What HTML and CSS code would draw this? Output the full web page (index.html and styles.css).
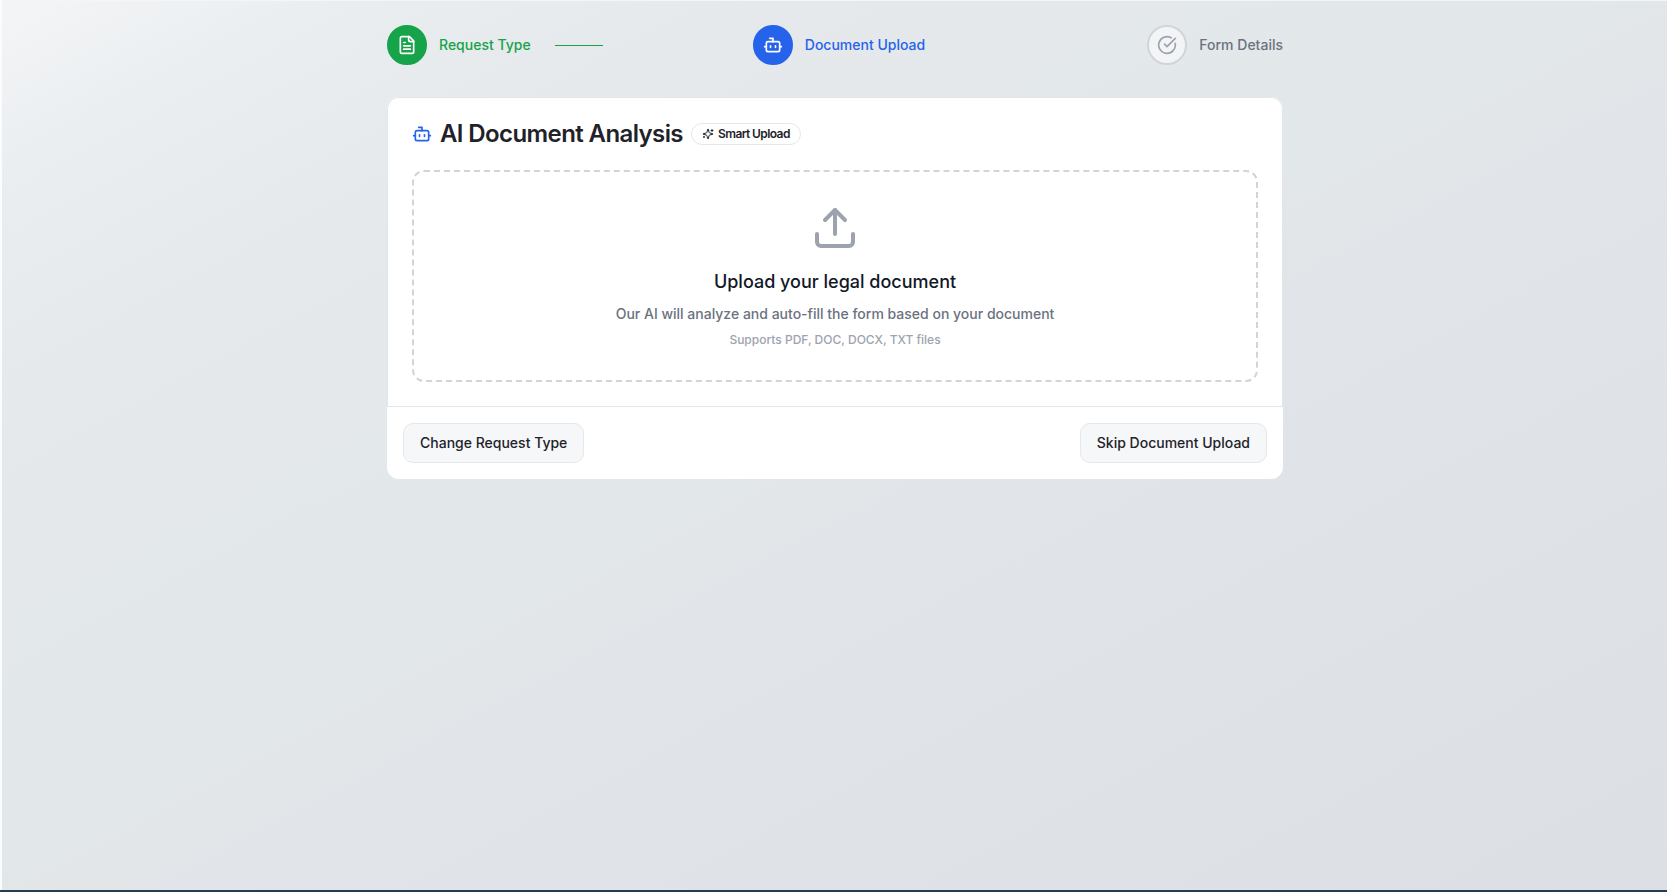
FILE: index.html
```html
<!DOCTYPE html>
<html lang="en">
<head>
<meta charset="utf-8">
<title>AI Document Analysis</title>
<link rel="stylesheet" href="styles.css">
</head>
<body>
<main class="page">
  <div class="container">
    <nav class="steps">
      <div class="step step-done">
        <span class="step-circle"><svg class="icon" viewBox="0 0 24 24"><path d="M15 2H6a2 2 0 0 0-2 2v16a2 2 0 0 0 2 2h12a2 2 0 0 0 2-2V7Z"/><path d="M14 2v4a2 2 0 0 0 2 2h4"/><path d="M10 9H8"/><path d="M16 13H8"/><path d="M16 17H8"/></svg></span>
        <span class="step-label">Request Type</span>
        <span class="step-line"></span>
      </div>
      <div class="step step-active">
        <span class="step-circle"><svg class="icon" viewBox="0 0 24 24"><path d="M12 8V4H8"/><rect width="16" height="12" x="4" y="8" rx="2"/><path d="M2 14h2"/><path d="M20 14h2"/><path d="M15 13v2"/><path d="M9 13v2"/></svg></span>
        <span class="step-label">Document Upload</span>
        <span class="step-line"></span>
      </div>
      <div class="step step-todo">
        <span class="step-circle"><svg class="icon" viewBox="0 0 24 24"><path d="M21.801 10A10 10 0 1 1 17 3.335"/><path d="m9 11 3 3L22 4"/></svg></span>
        <span class="step-label">Form Details</span>
      </div>
    </nav>
    <section class="card">
      <div class="card-body">
        <h1 class="title">
          <svg class="icon title-icon" viewBox="0 0 24 24"><path d="M12 8V4H8"/><rect width="16" height="12" x="4" y="8" rx="2"/><path d="M2 14h2"/><path d="M20 14h2"/><path d="M15 13v2"/><path d="M9 13v2"/></svg>
          <span>AI Document Analysis</span>
          <span class="badge"><svg class="icon badge-icon" viewBox="0 0 24 24"><path d="M9.937 15.5A2 2 0 0 0 8.5 14.063l-6.135-1.582a.5.5 0 0 1 0-.962L8.5 9.936A2 2 0 0 0 9.937 8.5l1.582-6.135a.5.5 0 0 1 .963 0L14.063 8.5A2 2 0 0 0 15.5 9.937l6.135 1.581a.5.5 0 0 1 0 .964L15.5 14.063a2 2 0 0 0-1.437 1.437l-1.582 6.135a.5.5 0 0 1-.963 0z"/><path d="M20 3v4"/><path d="M22 5h-4"/><path d="M4 17v2"/><path d="M5 18H3"/></svg>Smart Upload</span>
        </h1>
        <div class="dropzone">
          <svg class="icon upload-icon" viewBox="0 0 24 24"><path d="M21 15v4a2 2 0 0 1-2 2H5a2 2 0 0 1-2-2v-4"/><path d="m17 8-5-5-5 5"/><path d="M12 3v12"/></svg>
          <h2 class="drop-title">Upload your legal document</h2>
          <p class="drop-text">Our AI will analyze and auto-fill the form based on your document</p>
          <p class="drop-hint">Supports PDF, DOC, DOCX, TXT files</p>
        </div>
      </div>
      <footer class="card-footer">
        <button class="button">Change Request Type</button>
        <button class="button">Skip Document Upload</button>
      </footer>
    </section>
  </div>
</main>
</body>
</html>
```
FILE: styles.css
```css
* { box-sizing: border-box; margin: 0; padding: 0; }
body { font-family: Inter, sans-serif; font-size: 14px; line-height: 20px; color: #1f2229; }
.page {
  height: 100vh;
  padding: 25px 0 0 3px;
  border-bottom: 2px solid #233e50;
  background:
    linear-gradient(90deg, #fafcfd 2px, transparent 2px),
    linear-gradient(180deg, #f3f6f8 1px, transparent 1px),
    linear-gradient(to bottom right, #f3f5f7 0%, #eaedef 11%, #e5e9eb 23%, #e2e7e9 48%, #e1e4e8 56%, #dcdfe4 100%);
}
.container { width: 896px; margin: 0 auto; }
.icon { width: 20px; height: 20px; fill: none; stroke: currentColor; stroke-width: 2; stroke-linecap: round; stroke-linejoin: round; flex: none; }
.steps { display: flex; justify-content: space-between; margin-bottom: 32px; }
.step { display: flex; align-items: center; }
.step-circle { display: flex; align-items: center; justify-content: center; width: 40px; height: 40px; border-radius: 50%; border: 2px solid; }
.step-label { margin-left: 12px; font-weight: 500; }
.step-line { width: 48px; height: 1px; margin-left: 24px; }
.step-done { color: #16a34a; }
.step-done .step-circle { background: #16a34a; border-color: #16a34a; color: #fff; }
.step-done .step-line { background: #16a34a; }
.step-active { color: #2563eb; }
.step-active .step-circle { background: #2563eb; border-color: #2563eb; color: #fff; }
.step-todo { color: #6b7280; }
.step-todo .step-circle { background: #f3f4f6; border-color: #d1d5db; color: #9ca3af; }
.card { border-radius: 12px; overflow: hidden; background: #fff; }
.card-body { padding: 24px; border: 1px solid #e2e5ea; border-bottom: 0; border-radius: 12px 12px 0 0; }
.title { display: flex; align-items: center; gap: 8px; height: 24px; margin-bottom: 24px; font-size: 24px; line-height: 24px; font-weight: 600; letter-spacing: -.6px; }
.title-icon { color: #2563eb; }
.badge { display: inline-flex; align-items: center; gap: 4px; height: 22px; padding: 2px 10px; border: 1px solid #e4e7eb; border-radius: 11px; font-size: 12px; line-height: 16px; }
.badge-icon { width: 12px; height: 12px; }
.dropzone { display: flex; flex-direction: column; align-items: center; padding: 32px; border: 2px dashed #d1d5db; border-radius: 12px; }
.upload-icon { width: 48px; height: 48px; color: #9ca3af; }
.drop-title { margin: 16px 0 8px; font-size: 18px; line-height: 28px; font-weight: 500; color: #111827; }
.drop-text { margin-bottom: 8px; font-weight: 500; color: #6b7280; }
.drop-hint { font-size: 12px; line-height: 16px; font-weight: 500; color: #9ca3af; }
.card-footer { display: flex; justify-content: space-between; padding: 16px; border-top: 1px solid #e2e5ea; }
.button { height: 40px; padding: 0 16px; border: 1px solid #e4e7eb; border-radius: 10px; background: #f5f7f9; color: #1f2229; font: 500 14px/20px Inter, sans-serif; }
```
